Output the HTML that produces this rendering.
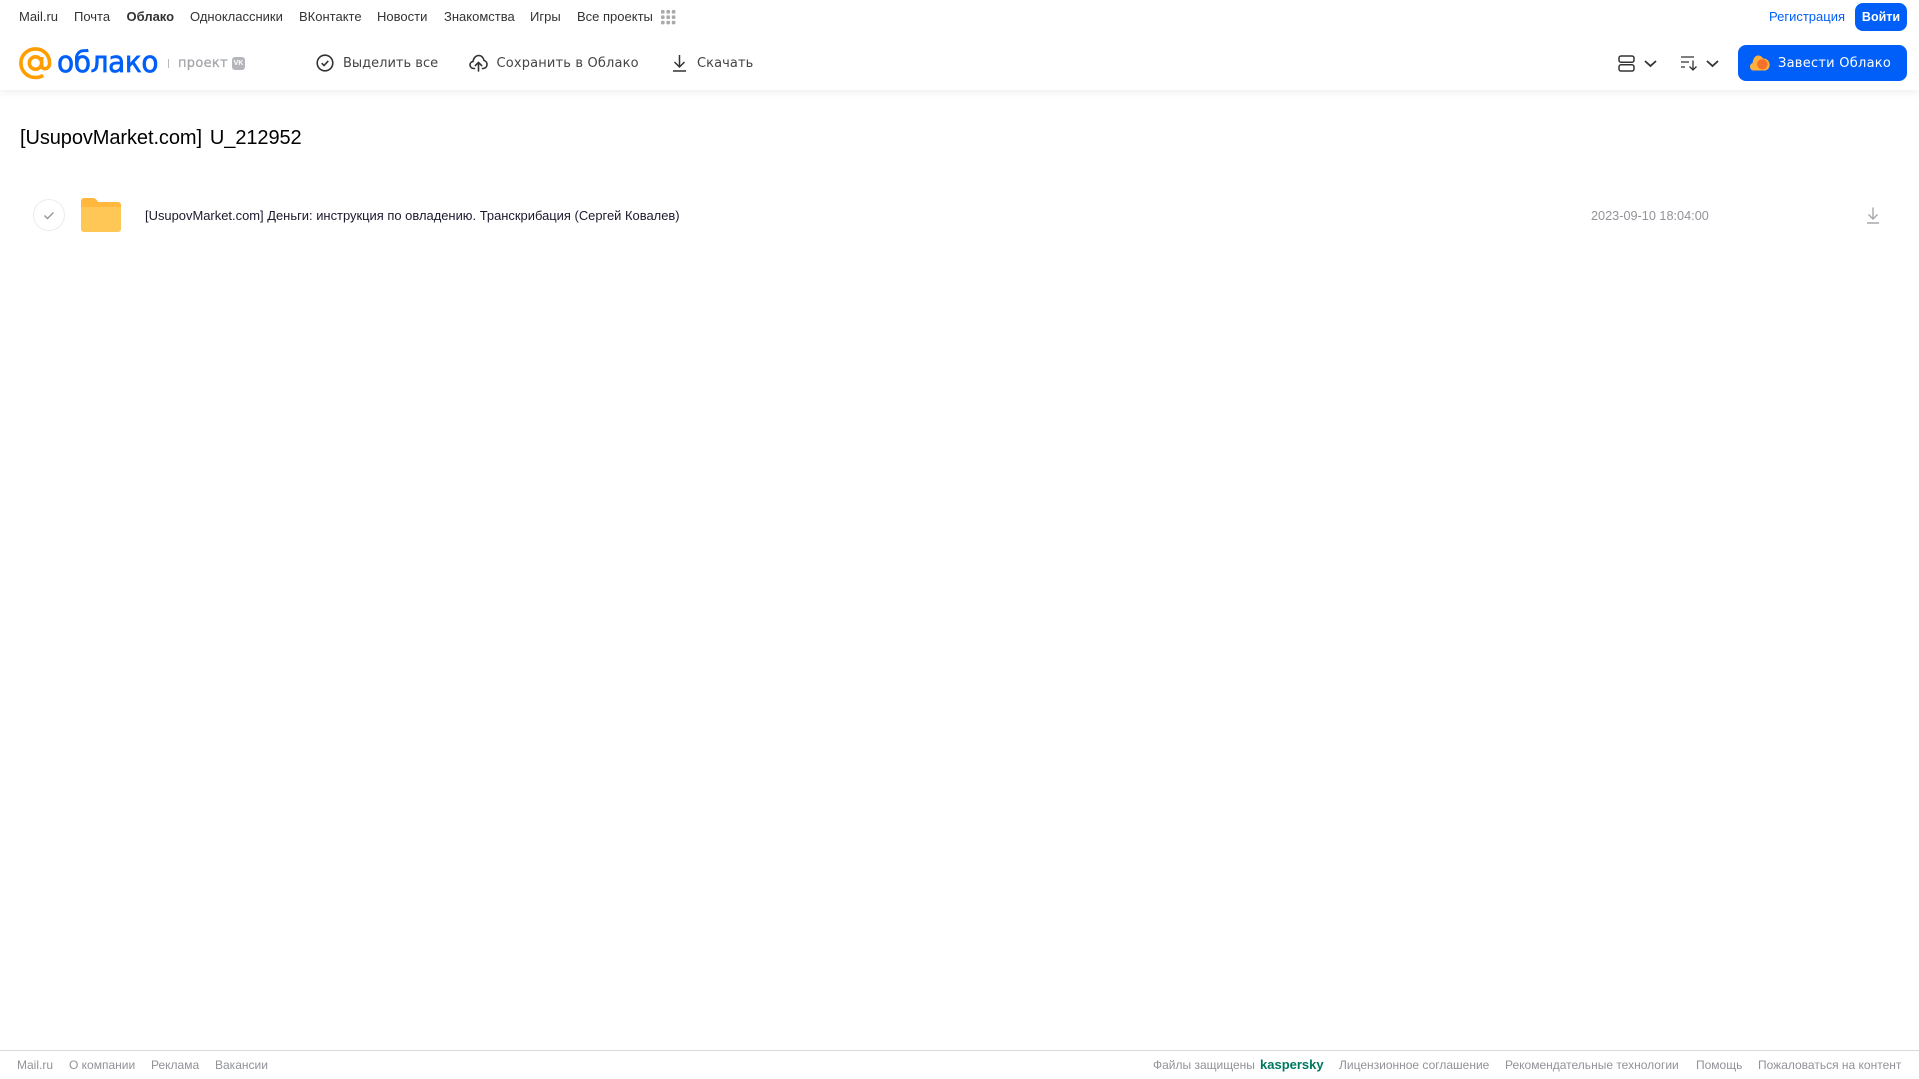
<!DOCTYPE html>
<html lang="ru"><head><meta charset="utf-8"><title>Облако</title>
<style>
html,body{margin:0;padding:0;width:1919px;height:1079px;overflow:hidden;background:#fff;font-family:"Liberation Sans","DejaVu Sans",sans-serif}
.t{position:absolute;white-space:nowrap;line-height:16px}
.n{font-size:13px;color:#333;top:8.5px}
.a{color:#444;top:56px;font-family:"DejaVu Sans","Liberation Sans",sans-serif;font-size:13px;letter-spacing:.08px}
.f{font-size:12px;color:#919399;top:1057px}
svg{position:absolute;overflow:visible}
#hdr{position:absolute;left:0;top:0;width:1919px;height:90px;background:#fff;box-shadow:0 2px 8px rgba(0,0,0,.07)}
</style></head><body>
<div id="hdr"></div>
<span class="t n" style="left:19px">Mail.ru</span>
<span class="t n" style="left:74px">Почта</span>
<span class="t n" style="left:126.5px;font-weight:bold">Облако</span>
<span class="t n" style="left:190px">Одноклассники</span>
<span class="t n" style="left:299px">ВКонтакте</span>
<span class="t n" style="left:377px">Новости</span>
<span class="t n" style="left:444px">Знакомства</span>
<span class="t n" style="left:530px">Игры</span>
<span class="t n" style="left:577px">Все проекты</span>
<svg style="left:661px;top:10px" width="15" height="15" fill="#aaa"><rect x="0" y="0" width="3.6" height="3.6" rx="1"/><rect x="5.4" y="0" width="3.6" height="3.6" rx="1"/><rect x="10.8" y="0" width="3.6" height="3.6" rx="1"/><rect x="0" y="5.4" width="3.6" height="3.6" rx="1"/><rect x="5.4" y="5.4" width="3.6" height="3.6" rx="1"/><rect x="10.8" y="5.4" width="3.6" height="3.6" rx="1"/><rect x="0" y="10.8" width="3.6" height="3.6" rx="1"/><rect x="5.4" y="10.8" width="3.6" height="3.6" rx="1"/><rect x="10.8" y="10.8" width="3.6" height="3.6" rx="1"/></svg>

<svg style="left:19px;top:47px" width="33" height="33" viewBox="0 0 33 33" fill="none" stroke="#ff9e00" stroke-width="3.6"><circle cx="16.5" cy="16" r="6.2"/><path d="M22.7 10v8.5c0 4.6 7.900 4.600 7.900-2.500C30.600 8 24.500 1.900 16.500 1.900S1.900 8 1.900 16s6.300 14.500 14.600 14.500c3.200 0 5.700-.8 7.700-2.100"/></svg>
<span class="t" style="left:57px;top:45px;font-size:29px;line-height:34px;color:#005ff9;font-family:'DejaVu Sans',sans-serif;letter-spacing:-.4px;-webkit-text-stroke:.7px #005ff9;transform-origin:left center;transform:scaleX(.965)">облако</span>
<div style="position:absolute;left:168px;top:59px;width:1px;height:9px;background:#bbb"></div>
<span class="t" style="left:178px;top:55.500px;font-size:13px;color:#a5a7ab;font-family:'DejaVu Sans',sans-serif;letter-spacing:.3px;-webkit-text-stroke:.3px #a5a7ab">проект</span>
<div style="position:absolute;left:232px;top:57px;width:13px;height:13px;border-radius:3px;background:#b4b6ba;color:#fff;font:bold 7px/13px 'Liberation Sans',sans-serif;text-align:center">VK</div>

<svg style="left:316px;top:54px" width="18" height="18" viewBox="0 0 18 18" fill="none" stroke="#333" stroke-width="1.600"><circle cx="9" cy="9" r="7.800"/><path d="M5.700 9.200l2.300 2.300 4.300-4.600"/></svg>
<span class="t a" style="left:343px;letter-spacing:0">Выделить все</span>
<svg style="left:469px;top:54px" width="19" height="18" viewBox="0 0 19 18" fill="none" stroke="#333" stroke-width="1.600" stroke-linecap="round" stroke-linejoin="round"><path d="M5.500 14.500H5C2.500 14.500 1 12.900 1 11c0-1.800 1.300-3.200 3-3.400C4.500 4 6.800 1.500 9.700 1.500c2.700 0 4.800 2.100 5.300 5 1.700.4 3 1.900 3 3.900 0 2.300-1.600 4.100-4.500 4.100"/><path d="M9.500 17V9M6.300 11.600l3.200-3.200 3.200 3.200"/></svg>
<span class="t a" style="left:496.500px;letter-spacing:.16px">Сохранить в Облако</span>
<svg style="left:671.500px;top:54px" width="15" height="18" viewBox="0 0 15 18" fill="none" stroke="#333" stroke-width="1.500"><path d="M7.500 1v11.500M2.500 8l5 5 5-5M1 17h13"/></svg>
<span class="t a" style="left:697px">Скачать</span>

<svg style="left:1618px;top:55px" width="17" height="17" viewBox="0 0 17 17" fill="none" stroke="#333" stroke-width="1.500"><rect x="1" y="1" width="15" height="6.200" rx="2"/><rect x="1" y="9.800" width="15" height="6.200" rx="2"/></svg>
<svg style="left:1644px;top:60px" width="13" height="8" viewBox="0 0 13 8" fill="none" stroke="#333" stroke-width="1.800"><path d="M1 1l5.500 5L12 1"/></svg>
<svg style="left:1681px;top:56px" width="17" height="15" viewBox="0 0 17 15" fill="none" stroke="#333" stroke-width="1.300"><path d="M0 1h13M0 6h8M0 11h4M12 4.500V14M8.500 10.500l3.500 3.500 3.500-3.500"/></svg>
<svg style="left:1706px;top:60px" width="13" height="8" viewBox="0 0 13 8" fill="none" stroke="#333" stroke-width="1.800"><path d="M1 1l5.500 5L12 1"/></svg>

<span class="t" style="left:1769px;top:8.500px;font-size:13px;color:#005ff9">Регистрация</span>
<div style="position:absolute;left:1855px;top:3px;width:52px;height:28px;border-radius:8px;background:#005ff9;color:#fff;font:bold 12.500px/28px 'Liberation Sans',sans-serif;text-align:center">Войти</div>
<div style="position:absolute;left:1738px;top:45px;width:169px;height:36px;border-radius:8px;background:#005ff9"></div>
<svg style="left:1750px;top:54px" width="20" height="18" viewBox="0 0 20 18"><path d="M4 16.500C1.500 16.500 0 14.800 0 12.700c0-1.800 1-3.200 2.600-3.700C3 4.500 5.300 1.500 8 1.500c2.400 0 4.100 1.300 5 3 3.700-.4 6.700 2.800 6.700 6.300 0 3.300-2.200 5.700-5.200 5.700z" fill="#ffb03a"/><circle cx="12.300" cy="10.300" r="5.200" fill="#f5702a"/></svg>
<span class="t" style="left:1778px;top:56px;font-size:13px;color:#fff;font-family:'DejaVu Sans',sans-serif;letter-spacing:.25px">Завести Облако</span>

<span class="t" style="left:20px;top:126px;line-height:24px;font-size:20px;color:#000;word-spacing:2.500px;letter-spacing:-.08px">[UsupovMarket.com] U_212952</span>
<div style="position:absolute;left:33px;top:199px;width:30px;height:30px;border:1px solid #ebecee;border-radius:50%"></div>
<svg style="left:43px;top:211px" width="12" height="9" viewBox="0 0 12 9" fill="none" stroke="#919399" stroke-width="1.400"><path d="M1.500 4.500l3 3 6-6"/></svg>
<svg style="left:81px;top:198px" width="40" height="34" viewBox="0 0 40 34"><path d="M0 3a3 3 0 0 1 3-3h9c2 0 3 1 4 2.500L17 4h20a3 3 0 0 1 3 3v5H0z" fill="#ffb73d"/><path d="M0 9h40v22a3 3 0 0 1-3 3H3a3 3 0 0 1-3-3z" fill="#ffc755"/></svg>
<span class="t" style="left:145px;top:207.500px;font-size:12.940px;color:#1a1a2e">[UsupovMarket.com] Деньги: инструкция по овладению. Транскрибация (Сергей Ковалев)</span>
<span class="t" style="left:1591px;top:207.500px;font-size:12.700px;color:#919399">2023-09-10 18:04:00</span>
<svg style="left:1866px;top:207px" width="14" height="17" viewBox="0 0 14 17" fill="none" stroke="#a5a7ab" stroke-width="1.400"><path d="M7 0.500v11M2.500 7.500L7 12l4.500-4.500M1 16h12"/></svg>

<div style="position:absolute;left:0;top:1050px;width:1919px;height:1px;background:#d9d9d9"></div>
<span class="t f" style="left:17px">Mail.ru</span>
<span class="t f" style="left:69px">О компании</span>
<span class="t f" style="left:151px">Реклама</span>
<span class="t f" style="left:215px">Вакансии</span>
<span class="t f" style="left:1153px">Файлы защищены</span>
<span class="t f" style="left:1260px;color:#00775f;font-weight:bold;font-size:13px">kaspersky</span>
<span class="t f" style="left:1339px">Лицензионное соглашение</span>
<span class="t f" style="left:1505px">Рекомендательные технологии</span>
<span class="t f" style="left:1696px">Помощь</span>
<span class="t f" style="left:1758px">Пожаловаться на контент</span>
</body></html>
